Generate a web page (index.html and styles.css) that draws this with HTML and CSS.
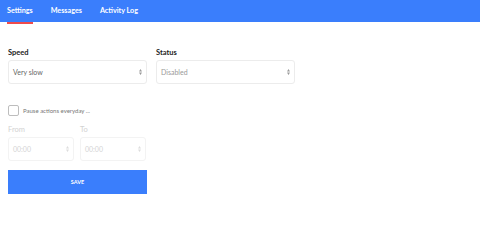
FILE: index.html
```html
<!DOCTYPE html>
<html>
<head>
<meta charset="utf-8">
<link rel="stylesheet" href="styles.css">
</head>
<body>
<nav class="tabs">
  <span class="tab active">Settings</span>
  <span class="tab">Messages</span>
  <span class="tab">Activity Log</span>
</nav>
<main class="content">
  <div class="row">
    <div class="field">
      <label class="label">Speed</label>
      <div class="select"><span>Very slow</span><svg class="arrows" width="3" height="6" viewBox="0 0 3 6"><path d="M0 2.5L1.5 0L3 2.5Z M0 3.5L1.5 6L3 3.5Z"/></svg></div>
    </div>
    <div class="field">
      <label class="label">Status</label>
      <div class="select muted"><span>Disabled</span><svg class="arrows" width="3" height="6" viewBox="0 0 3 6"><path d="M0 2.5L1.5 0L3 2.5Z M0 3.5L1.5 6L3 3.5Z"/></svg></div>
    </div>
  </div>
  <div class="check">
    <span class="box"></span>
    <span class="check-text">Pause actions everyday ...</span>
  </div>
  <div class="times">
    <div class="tfield">
      <label class="label light">From</label>
      <div class="select faded"><span>00:00</span><svg class="arrows" width="3" height="6" viewBox="0 0 3 6"><path d="M0 2.5L1.5 0L3 2.5Z M0 3.5L1.5 6L3 3.5Z"/></svg></div>
    </div>
    <div class="tfield">
      <label class="label light">To</label>
      <div class="select faded"><span>00:00</span><svg class="arrows" width="3" height="6" viewBox="0 0 3 6"><path d="M0 2.5L1.5 0L3 2.5Z M0 3.5L1.5 6L3 3.5Z"/></svg></div>
    </div>
  </div>
  <button class="save">SAVE</button>
</main>
</body>
</html>
```
FILE: styles.css
```css
* { box-sizing: border-box; }
body {
  margin: 0;
  background: #fff;
  font-family: "Lato", "Liberation Sans", sans-serif;
  color: #333;
}
.tabs {
  height: 22px;
  background: #3a7efc;
  display: flex;
  align-items: stretch;
  padding-left: 7px;
  gap: 18px;
}
.tab {
  color: #fff;
  font-size: 7.2px;
  font-weight: 700;
  line-height: 22px;
  border-bottom: 2px solid transparent;
  height: 24px;
}
.tab.active { border-bottom-color: #ef4b4b; }
.content {
  padding: 25px 8px 0 8px;
}
.row {
  display: flex;
  gap: 9px;
}
.field { width: 139px; display: flex; flex-direction: column; }
.label {
  font-size: 7.5px;
  font-weight: 700;
  color: #222;
  height: 12px;
  line-height: 12px;
  margin-bottom: 1px;
}
.label.light { color: #d2d2d2; font-weight: 400; }
.select {
  height: 24px;
  border: 1px solid #ececec;
  border-radius: 3px;
  display: flex;
  align-items: center;
  justify-content: space-between;
  padding: 0 4px 0 4px;
  font-size: 7px;
  color: #666;
}
.select.muted { color: #999; }
.select.faded { color: #d4d4d4; border-color: #f3f3f3; }
.arrows { fill: #999; }
.faded .arrows { fill: #ddd; }
.check {
  margin-top: 20px;
  display: flex;
  align-items: center;
  gap: 4px;
  height: 12px;
}
.box {
  width: 11px;
  height: 11px;
  border: 1px solid #bdbdbd;
  border-radius: 2px;
}
.check-text { font-size: 6px; color: #777; }
.times {
  margin-top: 8px;
  display: flex;
  gap: 6px;
}
.tfield { width: 66px; display: flex; flex-direction: column; }
.save {
  margin-top: 9px;
  width: 139px;
  height: 24px;
  border: none;
  background: #3a7efc;
  color: #fff;
  font-family: "Lato", "Liberation Sans", sans-serif;
  font-size: 5.5px;
  font-weight: 700;
  display: block;
}
```
